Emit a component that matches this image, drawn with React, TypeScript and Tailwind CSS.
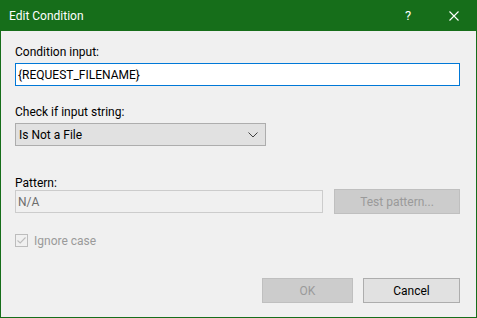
import React from "react";

export default function App() {
  return (
    <div
      className="w-[477px] h-[318px] flex flex-col bg-[#f0f0f0] border-x border-b border-[#166e1a] text-[12px] text-black overflow-hidden"
      style={{ fontFamily: '"Segoe UI", Roboto, "Noto Sans", sans-serif' }}
    >
      {/* Title bar */}
      <div className="h-[31px] shrink-0 bg-[#166e1a] text-white flex items-center -mx-px">
        <div className="pl-[9px] text-[12px] leading-none flex-1">Edit Condition</div>
        <div className="w-[46px] h-full flex items-center justify-center text-[13px]">?</div>
        <div className="w-[46px] h-full flex items-center justify-center">
          <svg width="10" height="10" viewBox="0 0 10 10">
            <path d="M0.5 0.5 L9.5 9.5 M9.5 0.5 L0.5 9.5" stroke="white" strokeWidth="1.1" />
          </svg>
        </div>
      </div>

      {/* Body */}
      <div className="flex flex-col pl-[14px] pr-[16px]">
        <div className="mt-[13px] h-[16px] leading-[16px]">Condition input:</div>
        <div className="mt-[3px] h-[23px] w-[445px] border border-[#0078d7] bg-white flex items-center pl-[2px] leading-none">
          {"{REQUEST_FILENAME}"}
        </div>

        <div className="mt-[18px] h-[16px] leading-[16px]">Check if input string:</div>
        <div className="mt-[3px] h-[23px] w-[251px] border border-[#adadad] bg-[#e1e1e1] flex items-center pl-[3px] pr-[7px] leading-none">
          <span className="flex-1">Is Not a File</span>
          <svg width="10" height="6" viewBox="0 0 10 6">
            <path d="M0.5 0.5 L5 5 L9.5 0.5" stroke="#404040" strokeWidth="1" fill="none" />
          </svg>
        </div>

        <div className="mt-[29px] h-[16px] leading-[16px]">Pattern:</div>
        <div className="mt-[-2px] flex items-center">
          <div className="h-[23px] w-[308px] border border-[#cccccc] bg-[#f0f0f0] flex items-center pl-[2px] text-[#6d6d6d] leading-none">
            N/A
          </div>
          <div className="ml-[11px] h-[25px] w-[126px] border border-[#bfbfbf] bg-[#cccccc] flex items-center justify-center text-[#9a9a9a] leading-none">
            Test pattern...
          </div>
        </div>

        <div className="mt-[20px] flex items-center h-[13px]">
          <div className="w-[13px] h-[13px] border border-[#bcbcbc] bg-[#f0f0f0] flex items-center justify-center">
            <svg width="9" height="7" viewBox="0 0 9 7">
              <path d="M0.5 3.5 L3.2 6 L8.5 0.5" stroke="#bcbcbc" strokeWidth="1.1" fill="none" />
            </svg>
          </div>
          <span className="ml-[6px] text-[#9a9a9a] leading-none">Ignore case</span>
        </div>

        <div className="mt-[31px] flex justify-end">
          <div className="h-[25px] w-[91px] border border-[#bfbfbf] bg-[#cccccc] flex items-center justify-center text-[#9a9a9a] leading-none">
            OK
          </div>
          <div className="ml-[10px] h-[25px] w-[97px] border border-[#adadad] bg-[#e1e1e1] flex items-center justify-center leading-none">
            Cancel
          </div>
        </div>
      </div>
    </div>
  );
}
